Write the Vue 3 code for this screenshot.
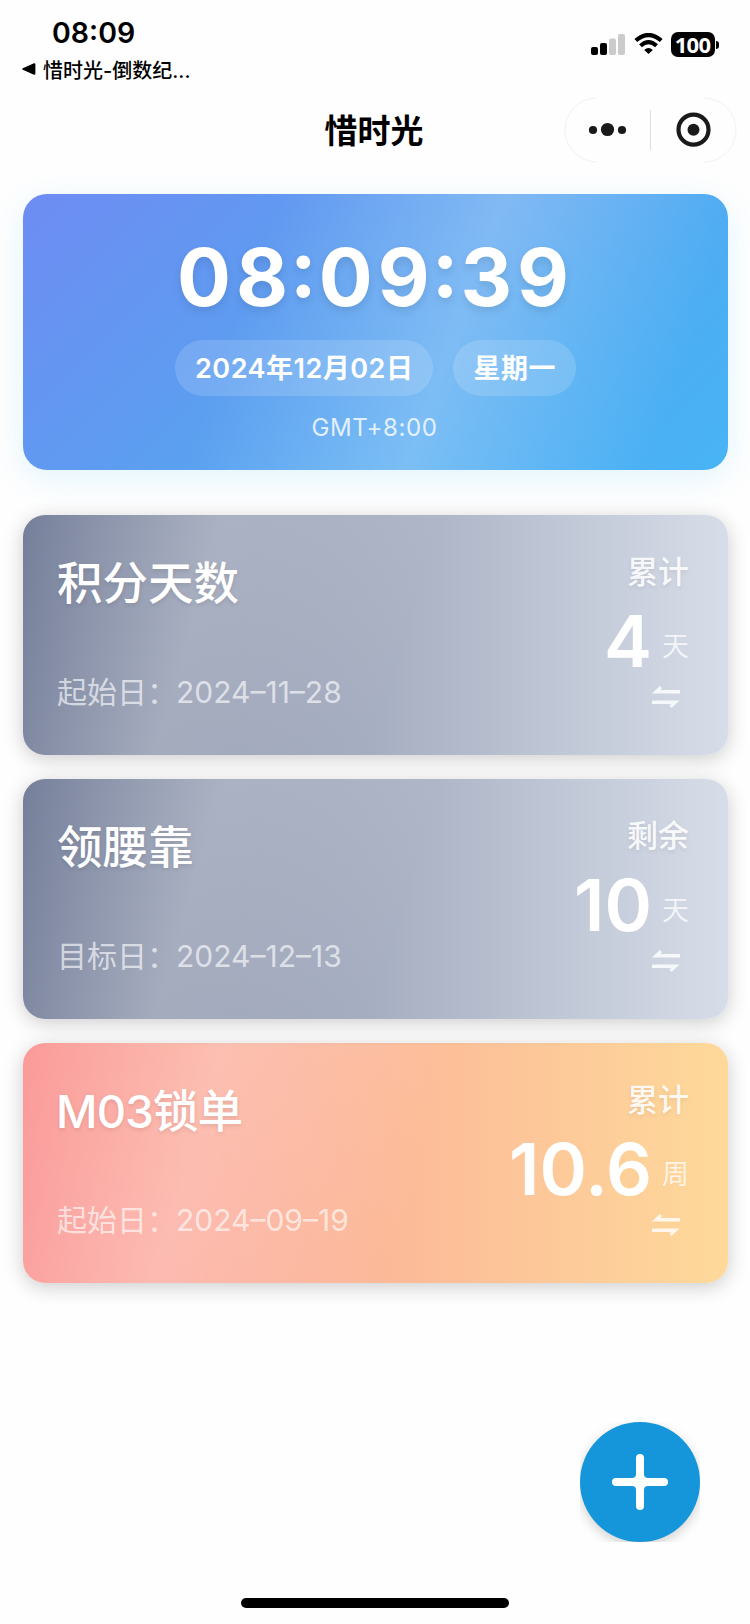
<script setup>
import { ref, computed } from 'vue';

const clock = ref({
  time: '08:09:39',
  date: '2024年12月02日',
  weekday: '星期一',
  zone: 'GMT+8:00',
});

// 冒号单独收窄间距
const timeParts = computed(() => clock.value.time.split(/(:)/));

const events = ref([
  { title: '积分天数', label: '起始日：', date: '2024–11–28', type: '累计', value: '4', unit: '天', theme: 'mist' },
  { title: '领腰靠', label: '目标日：', date: '2024–12–13', type: '剩余', value: '10', unit: '天', theme: 'mist' },
  { title: 'M03锁单', label: '起始日：', date: '2024–09–19', type: '累计', value: '10.6', unit: '周', theme: 'peach' },
]);
</script>

<template>
  <div class="page">
    <!-- 状态栏 -->
    <header class="status-bar">
      <div class="status-left">
        <div class="status-time">08:09</div>
        <div class="status-back">
          <svg class="back-icon" width="14" height="12" viewBox="0 0 14 12">
            <path d="M0.8 5.2 L12 0.3 Q13.4 0 13.4 1.4 V10.6 Q13.4 12 12 11.7 L0.8 6.8 Q-0.4 6 0.8 5.2 Z" />
          </svg>
          <span>惜时光-倒数纪...</span>
        </div>
      </div>
      <div class="status-right">
        <svg class="signal" width="34" height="21" viewBox="0 0 34 21">
          <rect x="0" y="13" width="7" height="8" rx="2" />
          <rect x="9" y="9" width="7" height="12" rx="2" />
          <rect class="weak" x="18" y="4.5" width="7" height="16.5" rx="2" />
          <rect class="weak" x="27" y="0" width="7" height="21" rx="2" />
        </svg>
        <svg class="wifi" width="29" height="22" viewBox="0 0 29 22">
          <path d="M1.800 7.500 Q14.500 -3.500 27.200 7.500" />
          <path d="M6.500 12.800 Q14.500 5.500 22.500 12.800" />
          <path class="wifi-dot" d="M14.500 21 L10.200 16.900 Q14.500 13.300 18.800 16.900 Z" />
        </svg>
        <div class="battery">
          <span class="battery-body">100</span>
          <span class="battery-cap"></span>
        </div>
      </div>
    </header>

    <!-- 导航栏 -->
    <nav class="nav-bar">
      <h1 class="nav-title">惜时光</h1>
      <svg class="capsule" width="173" height="66" viewBox="0 0 173 66">
        <path class="capsule-line" d="M33 1 A32 32 0 0 0 33 65 M140 1 A32 32 0 0 1 140 65" />
        <path class="capsule-split" d="M86.500 13 V53" />
        <circle cx="29" cy="33" r="4.100" />
        <circle cx="43.500" cy="32.500" r="6.600" />
        <circle cx="58" cy="33" r="4.100" />
        <circle class="ring" cx="129.500" cy="32.700" r="15" />
        <circle cx="129.500" cy="32.800" r="6" />
      </svg>
    </nav>

    <main class="content">
      <section class="clock-card">
        <div class="clock-time">
          <span
            v-for="(part, index) in timeParts"
            :key="index"
            :class="{ colon: part === ':' }"
          >{{ part }}</span>
        </div>
        <div class="clock-tags">
          <span class="tag">{{ clock.date }}</span>
          <span class="tag">{{ clock.weekday }}</span>
        </div>
        <div class="clock-zone">{{ clock.zone }}</div>
      </section>

      <section
        v-for="item in events"
        :key="item.title"
        class="event-card"
        :class="item.theme"
      >
        <div class="event-info">
          <h2 class="event-title">{{ item.title }}</h2>
          <p class="event-date">{{ item.label }}<span class="date-num">{{ item.date }}</span></p>
        </div>
        <div class="event-count">
          <div class="count-type">{{ item.type }}</div>
          <div class="count-row">
            <span class="count-value">{{ item.value }}</span>
            <span class="count-unit">{{ item.unit }}</span>
          </div>
          <svg class="swap" width="28" height="22" viewBox="0 0 28 22">
            <path d="M28 4 V7.600 H0 L7.800 0 L10 2.200 L8.200 4 Z" />
            <path d="M0 14.400 H27.500 L19.600 22 L17.400 19.800 L19.200 18 H0 Z" />
          </svg>
        </div>
      </section>
    </main>

    <button class="add-btn">
      <svg width="56" height="56" viewBox="0 0 56 56">
        <path d="M28 4 V52 M4 28 H52" />
        <path class="joint" d="M20 24 Q24 24 24 20 H32 Q32 24 36 24 V32 Q32 32 32 36 H24 Q24 32 20 32 Z" />
      </svg>
    </button>
    <div class="home-indicator"></div>
  </div>
</template>

<style>
body {
  margin: 0;
  background: #fefefe;
}
</style>

<style scoped>
.page {
  position: relative;
  width: 750px;
  height: 1624px;
  overflow: hidden;
  background: #fefefe;
  font-family: Inter, "Noto Sans CJK SC", sans-serif;
  color: #000;
}

/* 状态栏 */
.status-bar {
  display: flex;
  justify-content: space-between;
  height: 90px;
}

.status-left {
  padding: 15px 0 0 22px;
}

.status-time {
  padding-left: 30px;
  font-size: 28.5px;
  line-height: 36px;
  font-weight: 600;
  font-feature-settings: "case";
}

.status-back {
  display: flex;
  align-items: center;
  gap: 7px;
  height: 36px;
  font-size: 20px;
  font-weight: 500;
}

.status-right {
  display: flex;
  align-items: flex-start;
  padding: 32px 31px 0 0;
}

.signal {
  margin-top: 2px;
}

.signal .weak {
  fill: #cbcbcb;
}

.wifi {
  margin: 1px 8px 0 9px;
}

.wifi path {
  fill: none;
  stroke: #000;
  stroke-width: 4.2;
}

.wifi .wifi-dot {
  fill: #000;
  stroke: none;
}

.battery {
  display: flex;
  align-items: center;
  gap: 1px;
}

.battery-body {
  width: 44px;
  height: 25px;
  border-radius: 7px;
  background: #000;
  color: #fff;
  font-family: "Noto Sans", sans-serif;
  font-size: 22px;
  line-height: 24px;
  font-weight: 700;
  letter-spacing: -0.8px;
  text-indent: -1px;
  text-align: center;
}

.battery-cap {
  width: 3px;
  height: 8px;
  border-radius: 0 4px 4px 0;
  background: #000;
}

/* 导航栏 */
.nav-bar {
  position: relative;
  height: 80px;
}

.nav-title {
  margin: 0;
  padding-right: 2px;
  font-size: 33px;
  line-height: 82px;
  font-weight: 700;
  text-align: center;
}

.capsule {
  position: absolute;
  top: 7px;
  right: 13px;
  fill: #1a1a1a;
}

.capsule-line {
  fill: none;
  stroke: #f2f2f2;
}

.capsule-split {
  stroke: #dedede;
}

.ring {
  fill: none;
  stroke: #1a1a1a;
  stroke-width: 4.2;
}

/* 卡片列表 */
.content {
  display: flex;
  flex-direction: column;
  gap: 24px;
  padding: 24px 22px 0 23px;
}

.clock-card {
  display: flex;
  flex-direction: column;
  align-items: center;
  box-sizing: border-box;
  height: 276px;
  margin-bottom: 21px;
  padding-top: 33px;
  border-radius: 24px;
  color: #fff;
  background:
    linear-gradient(110deg, rgba(255, 255, 255, 0) 32%, rgba(255, 255, 255, 0.25) 60%, rgba(255, 255, 255, 0) 90%),
    linear-gradient(135deg, #6e8cf3 0%, #5b9ff0 42%, #4eaaf2 70%, #48b4f5 100%);
  box-shadow: 0 8px 32px rgba(60, 190, 240, 0.15);
}

.clock-time {
  display: flex;
  height: 100px;
  font-size: 80px;
  line-height: 100px;
  font-weight: 650;
  letter-spacing: 5px;
  font-feature-settings: "case";
  text-shadow: 0 4px 8px rgba(0, 0, 0, 0.1);
}

.colon {
  margin: 0 -3px;
}

.clock-tags {
  display: flex;
  gap: 20px;
  margin-top: 13px;
}

.tag {
  height: 56px;
  padding: 0 20px;
  border-radius: 28px;
  background: rgba(255, 255, 255, 0.15);
  font-size: 27px;
  line-height: 57px;
  font-weight: 600;
  letter-spacing: 0.5px;
}

.clock-zone {
  margin-top: 17px;
  padding-right: 2px;
  font-size: 24px;
  line-height: 30px;
  letter-spacing: 0.6px;
  opacity: 0.8;
}

.event-card {
  display: flex;
  justify-content: space-between;
  box-sizing: border-box;
  height: 240px;
  padding: 0 39px 0 34px;
  border-radius: 22px;
  color: #fff;
  box-shadow: 0 4px 20px rgba(0, 0, 0, 0.2);
}

.mist {
  background:
    linear-gradient(106deg, rgba(255, 255, 255, 0) 0%, rgba(255, 255, 255, 0.24) 26%, rgba(255, 255, 255, 0) 54%),
    linear-gradient(90deg, #757f9a, #d7dde8);
}

.peach {
  background:
    linear-gradient(106deg, rgba(255, 255, 255, 0) 0%, rgba(255, 255, 255, 0.24) 26%, rgba(255, 255, 255, 0) 56%),
    linear-gradient(90deg, #fb9a99, #fcb898 50%, #fed99a);
}

.event-info {
  padding-top: 39px;
}

.event-title {
  height: 60px;
  margin: 0;
  font-size: 45.5px;
  line-height: 60px;
  font-weight: 500;
  text-shadow: 0 2px 4px rgba(0, 0, 0, 0.1);
}

.peach .event-title {
  margin-left: -1px;
  letter-spacing: -0.8px;
}

.event-date {
  margin: 56px 0 0;
  font-size: 30px;
  line-height: 44px;
  font-weight: 400;
  color: rgba(255, 255, 255, 0.65);
}

.date-num {
  margin-left: -1px;
}

.event-count {
  display: flex;
  flex-direction: column;
  align-items: flex-end;
  padding-top: 35px;
}

.count-type {
  font-size: 31px;
  line-height: 44px;
  font-weight: 500;
  color: rgba(255, 255, 255, 0.88);
  text-shadow: 0 2px 4px rgba(0, 0, 0, 0.08);
}

.count-row {
  display: flex;
  align-items: center;
  gap: 10px;
  height: 94px;
}

.count-value {
  font-size: 72px;
  line-height: 94px;
  font-weight: 600;
}

.count-unit {
  padding-top: 6px;
  font-size: 27px;
  font-weight: 350;
  color: rgba(255, 255, 255, 0.8);
}

.swap {
  margin: -2px 9px 0 0;
  fill: rgba(255, 255, 255, 0.82);
}

/* 新增按钮 */
.add-btn {
  position: absolute;
  left: 580px;
  top: 1422px;
  display: flex;
  align-items: center;
  justify-content: center;
  width: 120px;
  height: 120px;
  padding: 0;
  border: none;
  border-radius: 50%;
  background: #1596db;
  box-shadow: 0 4px 12px rgba(0, 0, 0, 0.18);
  clip-path: inset(0);
}

.add-btn path {
  fill: none;
  stroke: #fff;
  stroke-width: 8;
  stroke-linecap: round;
}

.add-btn .joint {
  fill: #fff;
  stroke: none;
}

.home-indicator {
  position: absolute;
  left: 241px;
  bottom: 16px;
  width: 268px;
  height: 10px;
  border-radius: 5px;
  background: #000;
}
</style>
